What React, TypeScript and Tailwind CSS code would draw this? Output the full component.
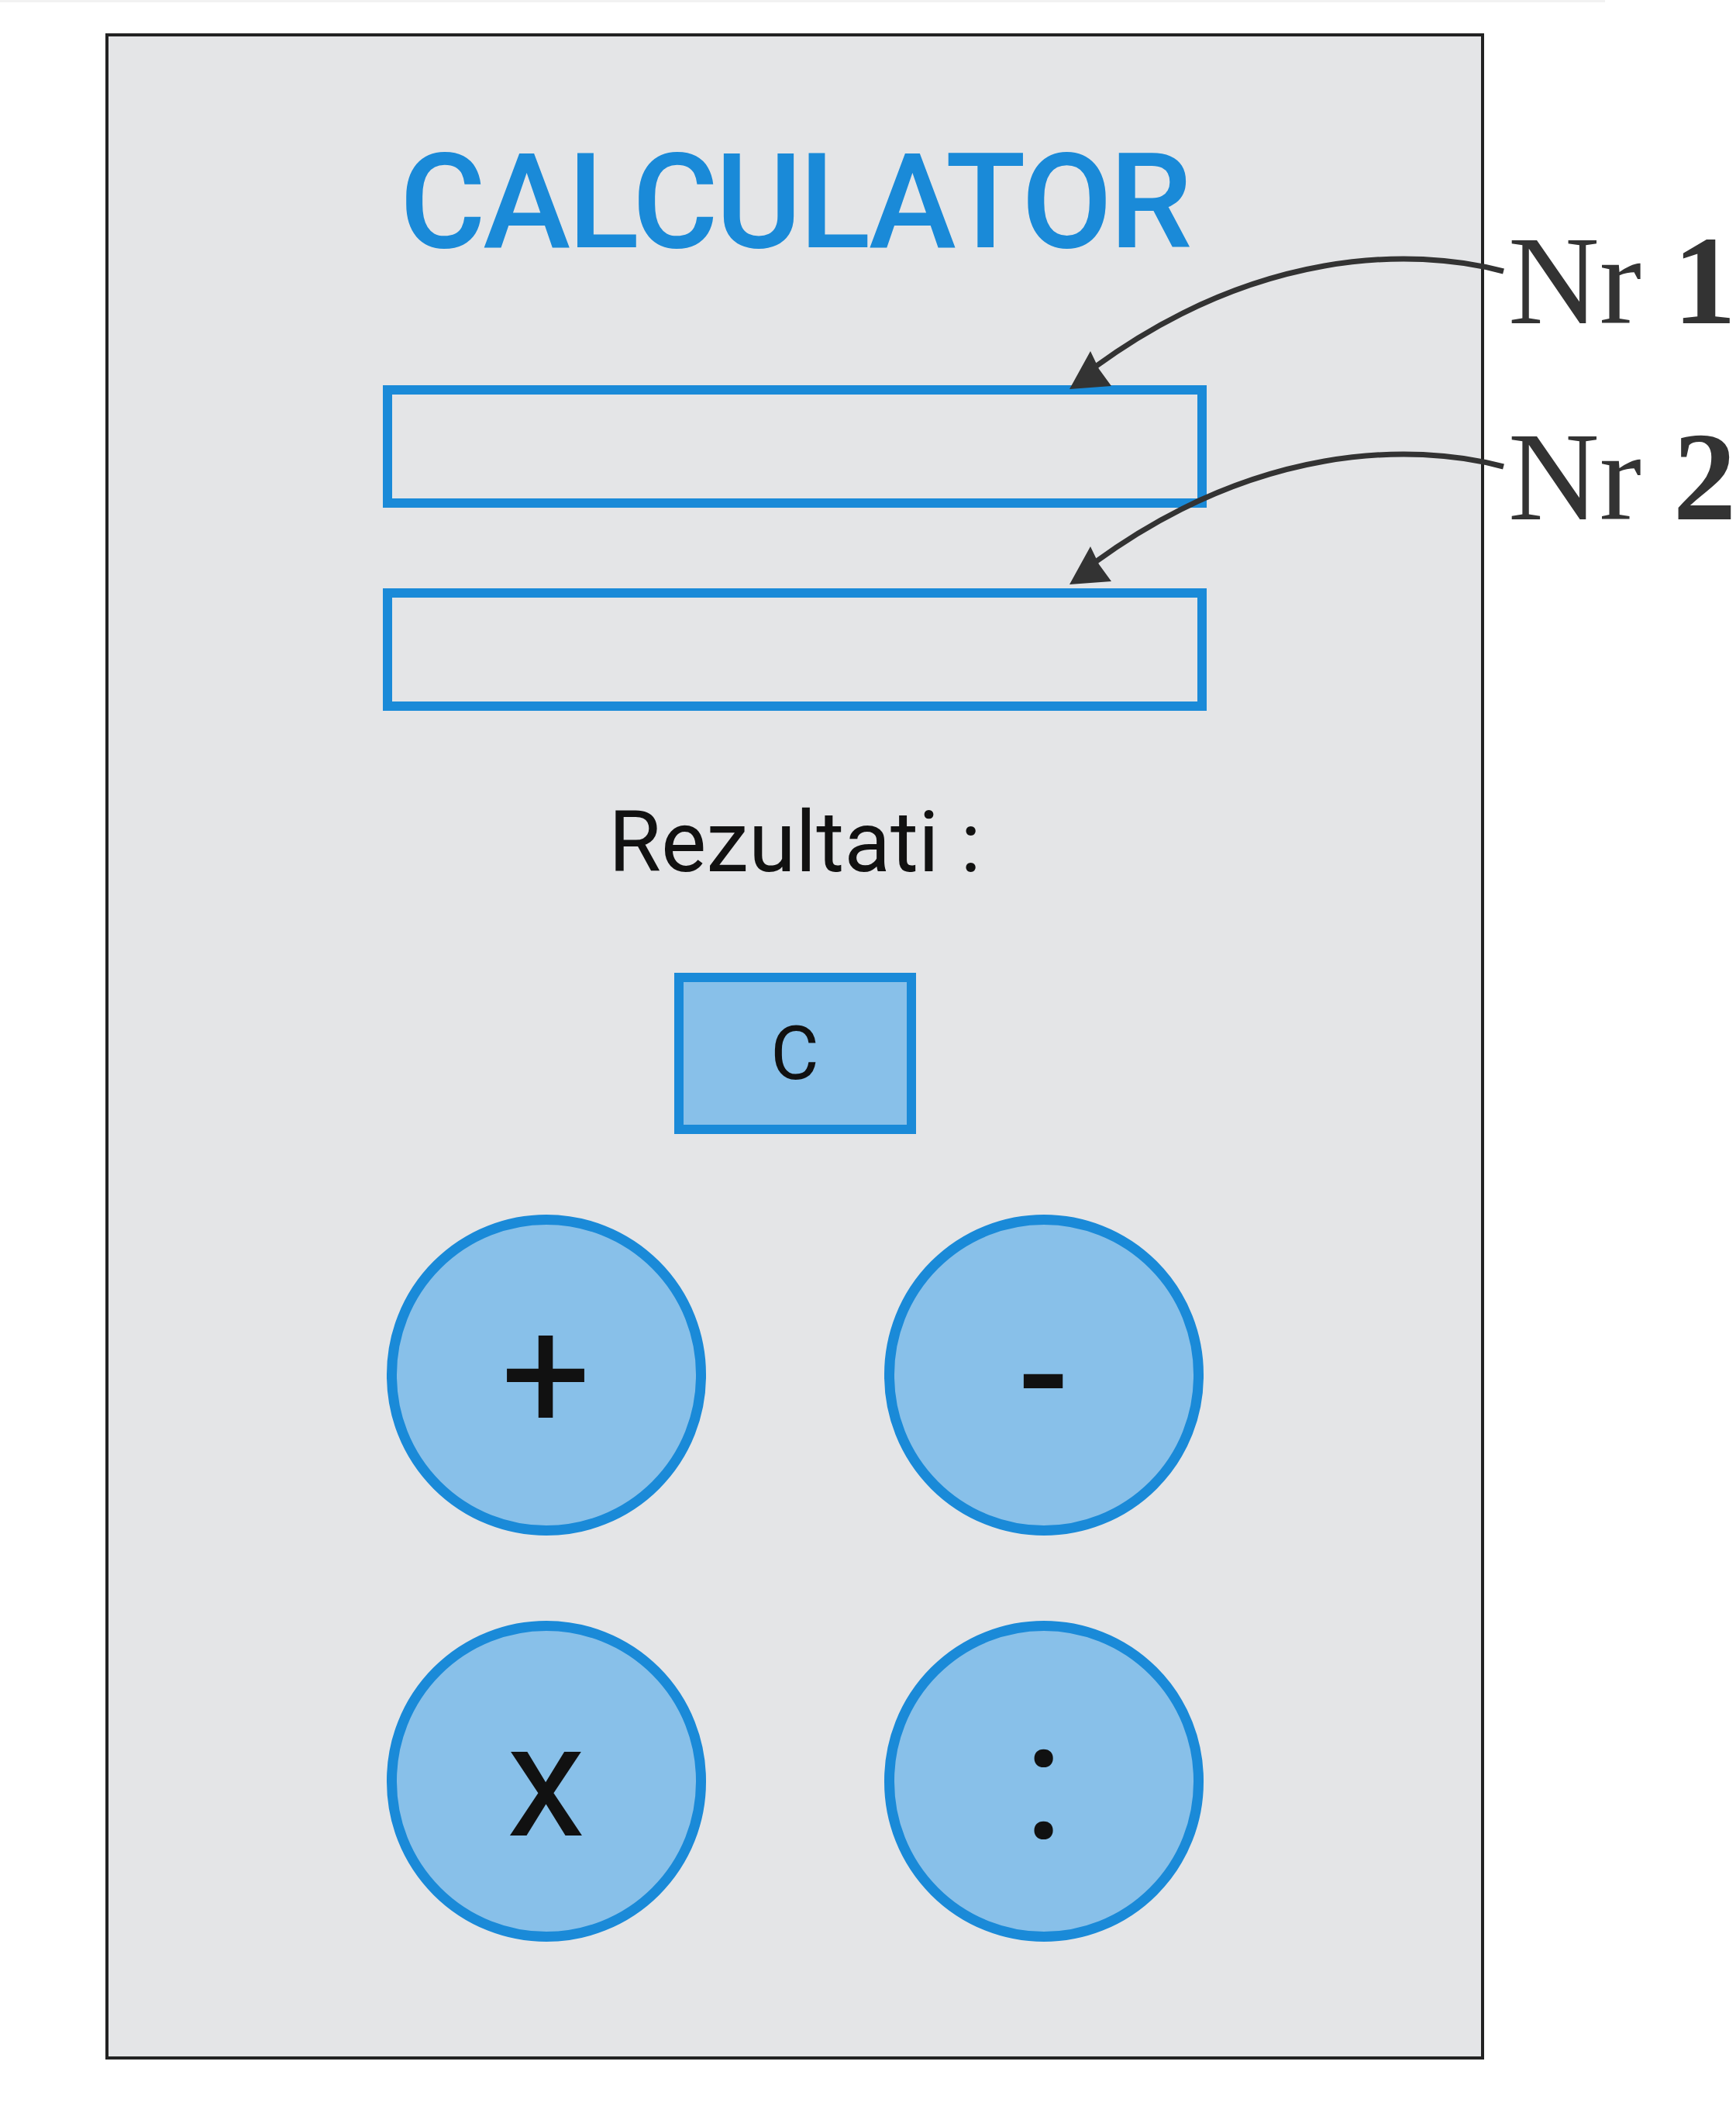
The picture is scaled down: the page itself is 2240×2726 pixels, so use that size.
import React from 'react';

const ops = [
  { label: '+', cls: 'text-[205px] font-normal' },
  { label: '-', cls: 'text-[195px] font-medium' },
  { label: 'x', cls: 'text-[205px] font-normal' },
  { label: ':', cls: 'text-[215px] font-normal' },
];

const Arrow = ({ dy }: { dy: number }) => (
  <g transform={`translate(0 ${dy})`}>
    <path d="M 1940 350 C 1820 318, 1620 322, 1412 474" fill="none" stroke="#333" strokeWidth="7" />
    <polygon points="1380,502 1407,453 1418,476 1434,498" fill="#333" />
  </g>
);

export default function App() {
  return (
    <div className="relative w-[2240px] h-[2726px] bg-white overflow-hidden">
      <div className="h-[3px] w-[2071px] bg-[#f2f2f2]" />

      <div className="ml-[136px] mt-[40px] w-[1779px] h-[2614px] border-4 border-[#222] bg-[#e4e5e7] flex flex-col items-center font-['Roboto',sans-serif]">
        <h1 className="mt-[129px] text-[170px] leading-none font-medium tracking-[-0.02em] text-[#1a8ad8]">
          CALCULATOR
        </h1>

        <input className="mt-[151px] w-[1063px] h-[158px] border-[12px] border-[#1a8ad8] bg-transparent outline-none" />
        <input className="mt-[104px] w-[1063px] h-[158px] border-[12px] border-[#1a8ad8] bg-transparent outline-none" />

        <p className="mt-[115px] text-[110px] leading-none text-[#111]">Rezultati :</p>

        <button className="mt-[113px] w-[312px] h-[208px] border-[12px] border-[#1a8ad8] bg-[#88c0e9] text-[96px] leading-none text-[#111] flex items-center justify-center">
          C
        </button>

        <div className="mt-[104px] grid grid-cols-2 gap-x-[230px] gap-y-[110px]">
          {ops.map((op) => (
            <button
              key={op.label}
              className={`w-[412px] h-[414px] rounded-full border-[13px] border-[#1a8ad8] bg-[#88c0e9] text-[#111] leading-none flex items-center justify-center ${op.cls}`}
            >
              {op.label}
            </button>
          ))}
        </div>
      </div>

      {/* annotation arrows + labels */}
      <svg className="absolute inset-0 pointer-events-none" width="2240" height="2726" viewBox="0 0 2240 2726">
        <Arrow dy={0} />
        <Arrow dy={252} />
      </svg>
      <div className="absolute left-[1946px] top-[281px] text-[163px] leading-none text-[#333] font-['Liberation_Serif',serif] whitespace-nowrap">
        Nr <span className="font-bold">1</span>
      </div>
      <div className="absolute left-[1946px] top-[534px] text-[163px] leading-none text-[#333] font-['Liberation_Serif',serif] whitespace-nowrap">
        Nr <span className="font-bold">2</span>
      </div>
    </div>
  );
}
